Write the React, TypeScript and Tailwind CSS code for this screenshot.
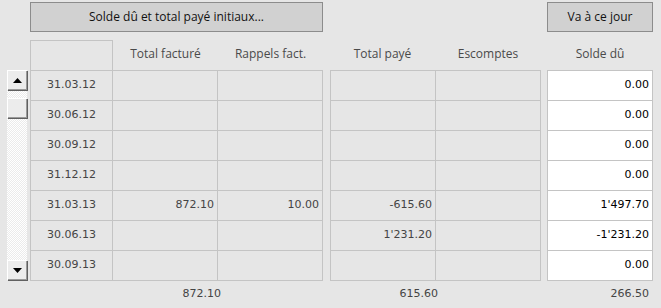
import React from "react";

const dates = ["31.03.12", "30.06.12", "30.09.12", "31.12.12", "31.03.13", "30.06.13", "30.09.13"];

const rows = [
  { tf: "", rf: "", tp: "", esc: "", solde: "0.00" },
  { tf: "", rf: "", tp: "", esc: "", solde: "0.00" },
  { tf: "", rf: "", tp: "", esc: "", solde: "0.00" },
  { tf: "", rf: "", tp: "", esc: "", solde: "0.00" },
  { tf: "872.10", rf: "10.00", tp: "-615.60", esc: "", solde: "1'497.70" },
  { tf: "", rf: "", tp: "1'231.20", esc: "", solde: "-1'231.20" },
  { tf: "", rf: "", tp: "", esc: "", solde: "0.00" },
];

const uiFont = "font-['Open_Sans','Noto_Sans',sans-serif]";
const numFont = "font-['DejaVu_Sans',sans-serif]";

function ScrollButton({ dir }: { dir: "up" | "down" }) {
  return (
    <div className="h-[20px] w-[20px] bg-[#ececec] border-t border-l border-white shadow-[inset_-1px_-1px_0_#9a9a9a,1px_1px_0_#606060] flex items-center justify-center">
      <svg width="9" height="5" viewBox="0 0 9 5">
        {dir === "up" ? <polygon points="4.5,0 9,5 0,5" fill="#000" /> : <polygon points="0,0 9,0 4.5,5" fill="#000" />}
      </svg>
    </div>
  );
}

function Scrollbar() {
  return (
    <div className="mt-[30px] w-[20px] h-[210px] flex flex-col bg-[repeating-conic-gradient(#ffffff_0_25%,#ebebeb_0_50%)] bg-[length:2px_2px]">
      <ScrollButton dir="up" />
      <div className="flex-1 pt-[8px]">
        <div className="h-[20px] w-[20px] bg-[#ececec] border-t border-l border-white shadow-[inset_-1px_-1px_0_#9a9a9a,1px_1px_0_#606060]" />
      </div>
      <ScrollButton dir="down" />
    </div>
  );
}

function Header({ children }: { children?: React.ReactNode }) {
  return <div className={`${uiFont} text-[12px] text-[#4a4a4a] flex items-center justify-center pb-[3px]`}>{children}</div>;
}

export default function App() {
  return (
    <div className="w-[661px] h-[308px] bg-[#e6e6e6] overflow-hidden pt-[2px]">
      <div className="flex h-[30px]">
        <button className={`${uiFont} ml-[30px] w-[293px] h-[30px] bg-[#d1d1d1] border border-[#8c8c8c] text-[12px] text-[#111]`}>
          Solde dû et total payé initiaux...
        </button>
        <button className={`${uiFont} ml-[224px] w-[106px] h-[30px] bg-[#d1d1d1] border border-[#8c8c8c] text-[12px] text-[#111]`}>
          Va à ce jour
        </button>
      </div>

      <div className="flex pl-[7px] mt-[8px] items-start">
        <Scrollbar />

        {/* left block: date, total facturé, rappels */}
        <div className="ml-[3px] w-[293px] flex flex-col">
          <div className="grid grid-cols-[83px_105px_105px] h-[30px]">
            <div className="border-t border-l border-r border-[#c4c4c4]" />
            <Header>Total facturé</Header>
            <Header>Rappels fact.</Header>
          </div>
          <div className="grid grid-cols-[81px_104px_104px] auto-rows-[29px] gap-px p-px bg-[#c4c4c4]">
            {rows.map((r, i) => (
              <React.Fragment key={i}>
                <div className={`${numFont} bg-[#e6e6e6] text-[11px] text-[#444] flex items-center justify-center`}>{dates[i]}</div>
                <div className={`${numFont} bg-[#e6e6e6] text-[11px] text-[#444] flex items-center justify-end pr-[3px]`}>{r.tf}</div>
                <div className={`${numFont} bg-[#e6e6e6] text-[11px] text-[#444] flex items-center justify-end pr-[3px]`}>{r.rf}</div>
              </React.Fragment>
            ))}
          </div>
          <div className={`${numFont} grid grid-cols-[85px_106px_102px] h-[27px] text-[11px] text-[#444]`}>
            <div />
            <div className="flex items-center justify-end">872.10</div>
            <div />
          </div>
        </div>

        {/* middle block: total payé, escomptes */}
        <div className="ml-[7px] w-[211px] flex flex-col">
          <div className="grid grid-cols-[105px_106px] h-[30px]">
            <Header>Total payé</Header>
            <Header>Escomptes</Header>
          </div>
          <div className="grid grid-cols-[104px_104px] auto-rows-[29px] gap-px p-px bg-[#c4c4c4]">
            {rows.map((r, i) => (
              <React.Fragment key={i}>
                <div className={`${numFont} bg-[#e6e6e6] text-[11px] text-[#444] flex items-center justify-end pr-[3px]`}>{r.tp}</div>
                <div className={`${numFont} bg-[#e6e6e6] text-[11px] text-[#444] flex items-center justify-end pr-[3px]`}>{r.esc}</div>
              </React.Fragment>
            ))}
          </div>
          <div className={`${numFont} grid grid-cols-[108px_103px] h-[27px] text-[11px] text-[#444]`}>
            <div className="flex items-center justify-end">615.60</div>
            <div />
          </div>
        </div>

        {/* solde dû */}
        <div className="ml-[6px] w-[106px] flex flex-col">
          <div className="h-[30px] grid">
            <Header>Solde dû</Header>
          </div>
          <div className="grid grid-cols-[104px] auto-rows-[29px] gap-px p-px bg-[#c4c4c4]">
            {rows.map((r, i) => (
              <div key={i} className={`${numFont} bg-white text-[11px] text-black flex items-center justify-end pr-[3px]`}>{r.solde}</div>
            ))}
          </div>
          <div className={`${numFont} h-[27px] text-[11px] text-[#444] flex items-center justify-end pr-[4px]`}>266.50</div>
        </div>
      </div>
    </div>
  );
}
